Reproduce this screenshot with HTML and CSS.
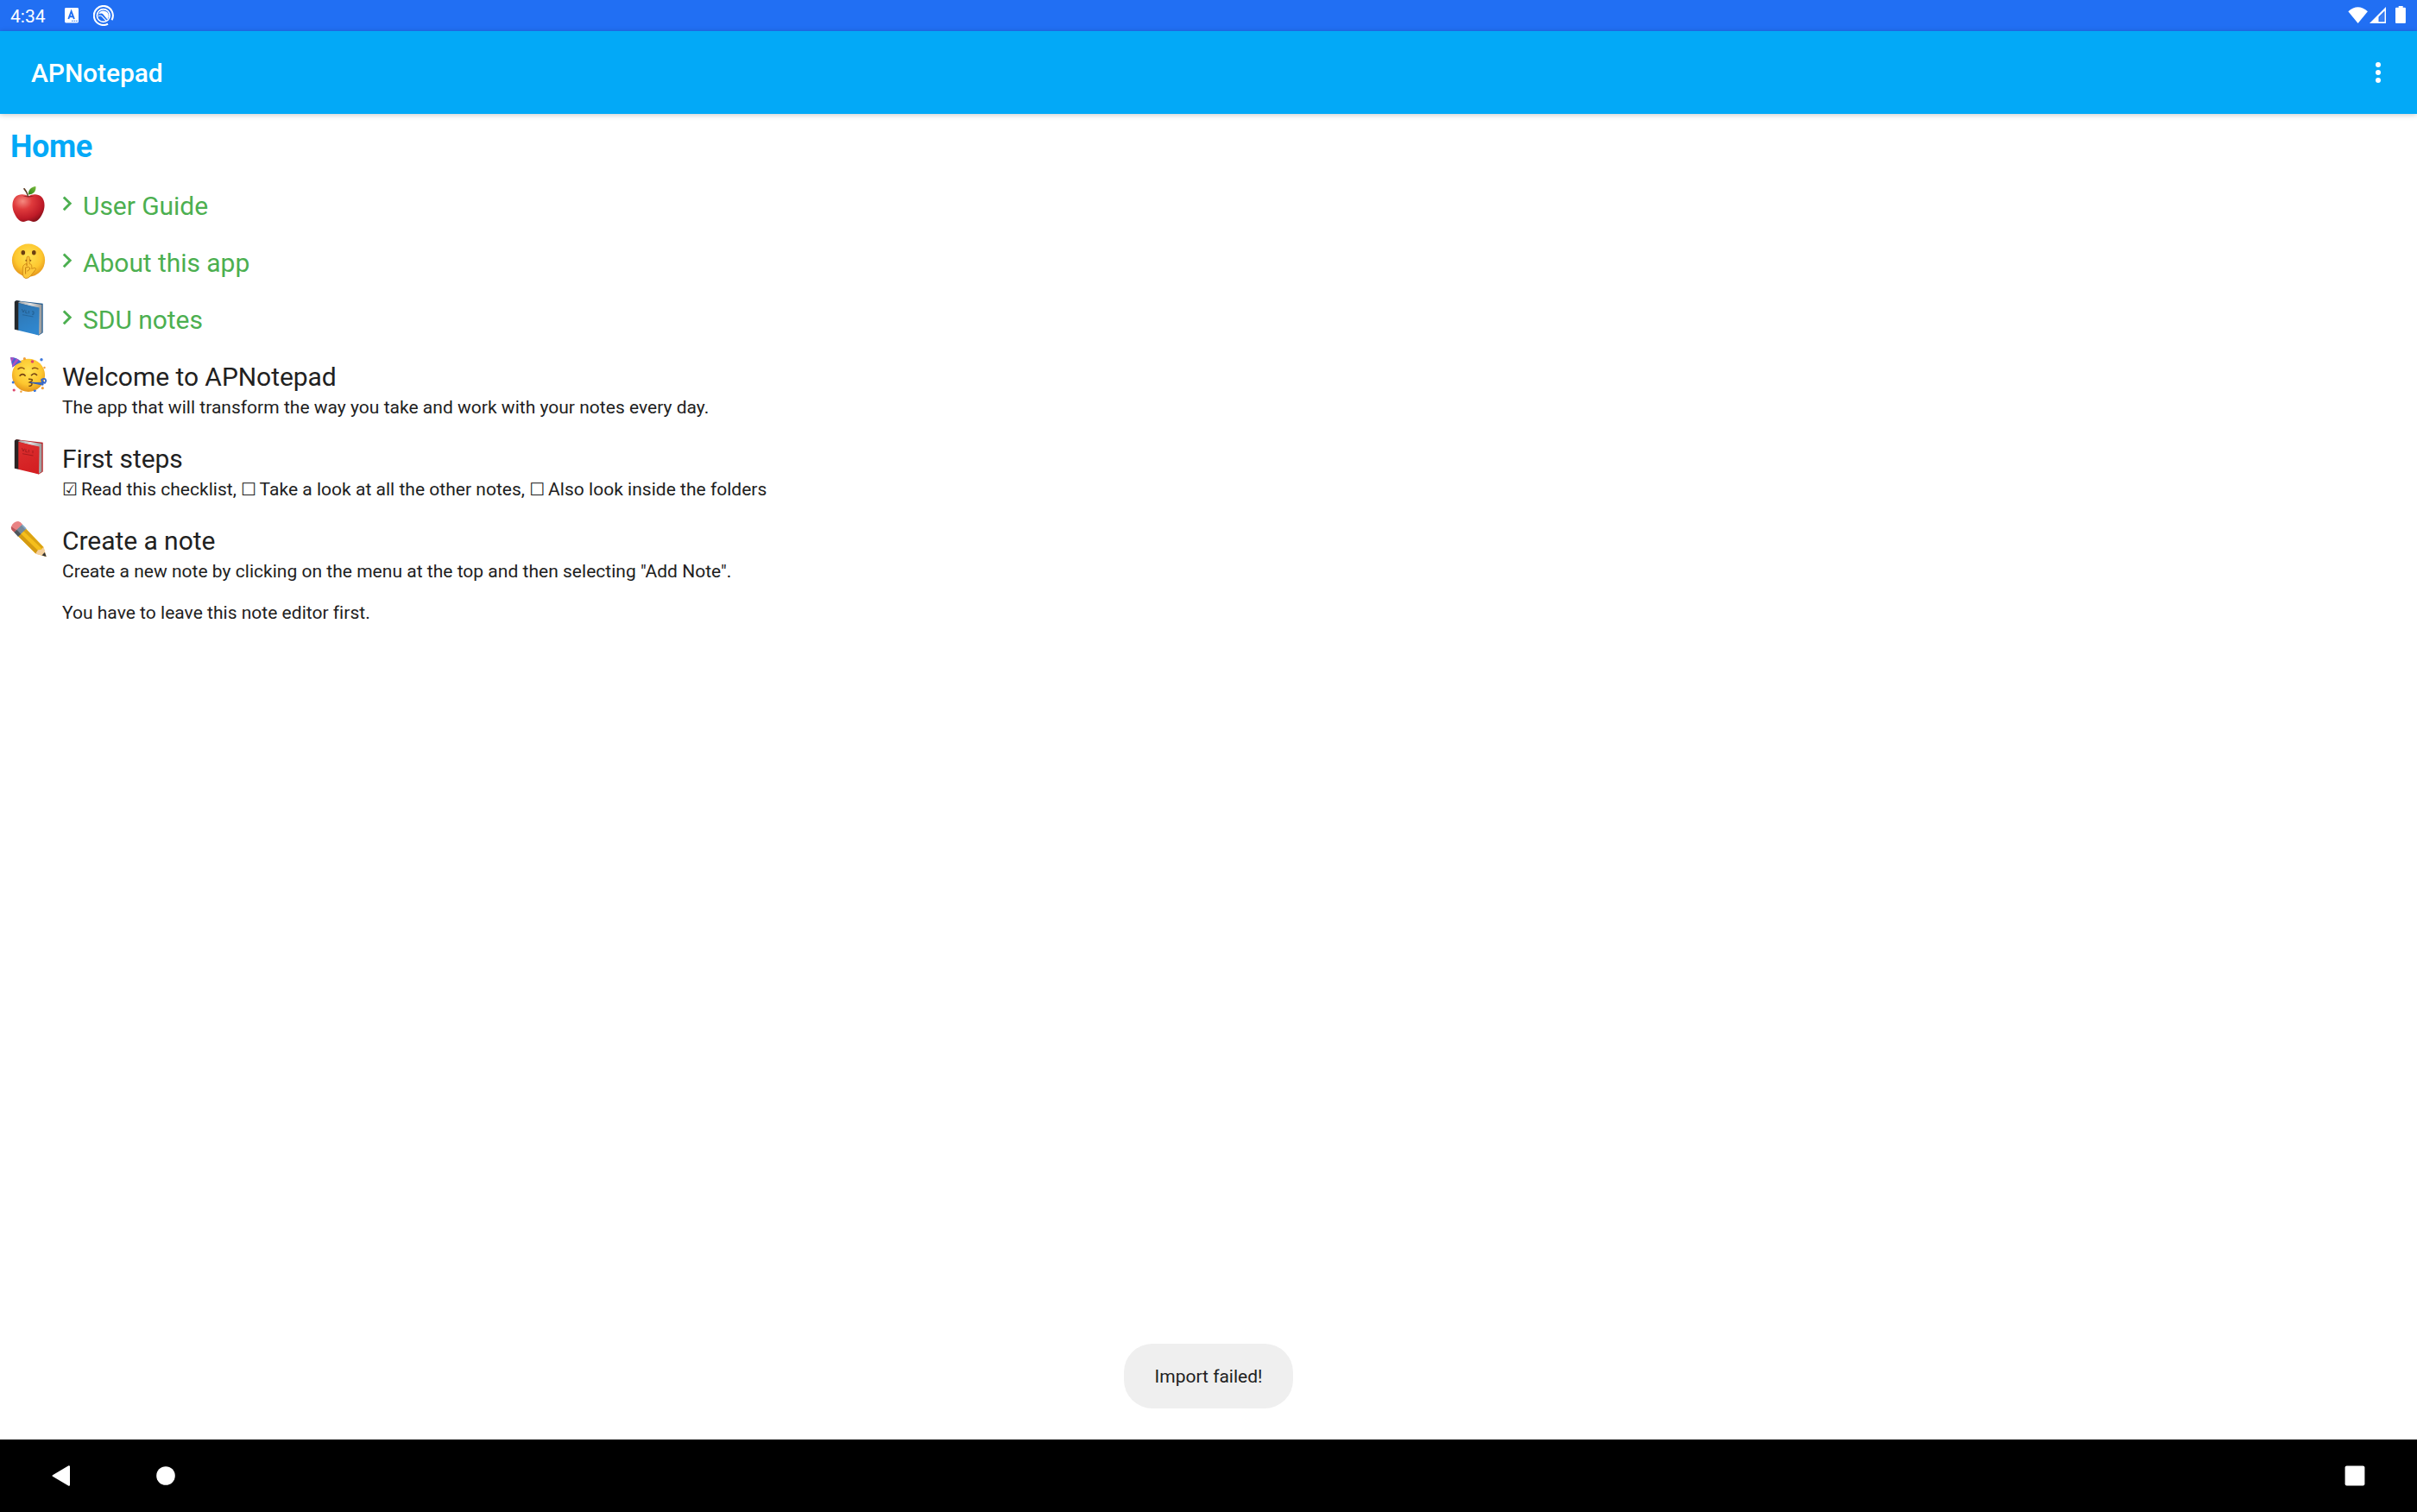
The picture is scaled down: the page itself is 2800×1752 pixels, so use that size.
FILE: index.html
```html
<!DOCTYPE html>
<html lang="en">
<head>
<meta charset="utf-8">
<title>APNotepad</title>
<link rel="stylesheet" href="styles.css">
</head>
<body>
<div class="screen">
  <header class="status-bar">
    <span class="clock">4:34</span>
    <svg class="status-letter" width="16" height="18" viewBox="0 0 16 18" aria-hidden="true">
      <rect width="16" height="17.5" rx="1.4" fill="#fff"/>
      <path d="M4.3 13 7.6 4.2 10.9 13M5.4 10.3h4.4" fill="none" stroke="#216ff3" stroke-width="1.9"/>
      <path d="M8 15.3h1.6M10.6 15.3h1.6M13.1 15.3h1.6" stroke="#216ff3" stroke-width="1.1"/>
    </svg>
    <svg class="status-q" width="24" height="24" viewBox="0 0 24 24" aria-hidden="true">
      <path d="M17 21.7A11 11 0 1 1 21.5 17.2" fill="none" stroke="#fff" stroke-width="2.1"/>
      <circle cx="11.8" cy="12" r="7.4" fill="none" stroke="#fff" stroke-width="1.7"/>
      <path d="M6.2 10.5A6 6 0 0 1 17.8 12.9Q17.5 14.8 16.4 16.4L11.2 10.2Q9.6 8.8 6.2 10.5Z" fill="#fff"/>
      <path d="M6 12.6Q8 11.4 9.6 12.4L15 18" fill="none" stroke="#fff" stroke-width="1.1"/>
    </svg>
    <svg class="status-system" width="68" height="22" viewBox="0 0 68 22" aria-hidden="true">
      <path d="M.3 6.3Q11.5-3.8 22.9 6.3L11.6 20Z" fill="#fff"/>
      <path fill-rule="evenodd" d="M25 20 44 1V20ZM35.5 12.4V18.3H42.5V5.4Z" fill="#fff"/>
      <path d="M36.7 12.7 41.6 7.8V17.4H36.7Z" fill="#fff" fill-opacity=".12"/>
      <path d="M58.7 0h5v1.7h2.2a1 1 0 0 1 1 1V19a1 1 0 0 1-1 1H56a1 1 0 0 1-1-1V2.7a1 1 0 0 1 1-1h2.7Z" fill="#fff"/>
    </svg>
  </header>

  <div class="app-bar">
    <h1 class="app-title">APNotepad</h1>
    <svg class="overflow" width="6" height="24" viewBox="0 0 6 24" aria-label="More options">
      <circle cx="3" cy="3" r="3" fill="#fff"/><circle cx="3" cy="12" r="3" fill="#fff"/><circle cx="3" cy="21" r="3" fill="#fff"/>
    </svg>
  </div>

  <main class="content">
    <h2 class="folder-title">Home</h2>
    <ul class="notes">
      <li class="note folder">
        <svg class="emoji" viewBox="0 0 42 42" aria-hidden="true">
          <defs>
            <radialGradient id="apple" cx=".32" cy=".25" r=".85"><stop offset="0" stop-color="#f58a80"/><stop offset=".35" stop-color="#df3a3c"/><stop offset=".75" stop-color="#be1a27"/><stop offset="1" stop-color="#7d0f18"/></radialGradient>
            <linearGradient id="leaf" x1="0" y1="1" x2="1" y2="0"><stop offset="0" stop-color="#2f7d17"/><stop offset="1" stop-color="#79bd3d"/></linearGradient>
          </defs>
          <path d="M21 12.5C25 9.6 32 9.2 36 13C40.5 17.5 40.3 25.5 37.7 31.5C34.8 38.3 31 42 27 42C24.5 42 23.5 40.6 21 40.6S17.5 42 15 42C11 42 7.2 38.3 4.3 31.5C1.7 25.5 1.5 17.5 6 13C10 9.2 17 9.6 21 12.5Z" fill="url(#apple)"/>
          <path d="M14 11.7Q21 15.3 28 11.7Q21 13 14 11.7Z" fill="#8c1720"/>
          <path d="M14.8 3.6 16.6 3Q20 6.6 21.4 12.7H20Q18.5 7.8 14.8 3.6Z" fill="#5b3a22"/>
          <path d="M20.6 10.5C21 4.6 24 1.6 29.4 1C30 6.4 27.2 10.4 20.6 10.5Z" fill="url(#leaf)"/>
        </svg>
        <svg class="chevron" width="12" height="18" viewBox="0 0 12 18" aria-hidden="true"><path d="M1.8 1.5 9.2 8.8 1.8 16.2" fill="none" stroke="#4caf50" stroke-width="2.9"/></svg>
        <div class="note-text"><h3 class="note-title">User Guide</h3></div>
      </li>
      <li class="note folder">
        <svg class="emoji" viewBox="0 0 42 42" aria-hidden="true">
          <defs>
            <radialGradient id="face" cx=".5" cy=".38" r=".62"><stop offset="0" stop-color="#ffe352"/><stop offset=".65" stop-color="#fdc72f"/><stop offset="1" stop-color="#e5951b"/></radialGradient>
          </defs>
          <circle cx="21" cy="20.6" r="19.1" fill="url(#face)"/>
          <ellipse cx="14.8" cy="11.8" rx="2.3" ry="2.7" fill="#6c4012"/><ellipse cx="27.3" cy="11.8" rx="2.3" ry="2.7" fill="#6c4012"/>
          <path d="M17.6 21.4Q20.8 18.4 24 21.4" fill="none" stroke="#8a5314" stroke-width="1.5"/>
          <path d="M19 27V18Q19 16 20.6 16T22.2 18V24.8C24.8 24.6 25 27.4 24.7 30.4L28.2 29.4Q30.3 29.6 29.2 31.4L23.4 38.8Q21 41.7 17.7 41.6Q14.2 40.6 14.3 36.2V30Q14.7 24.8 19 24.6Z" fill="#fdc83b" stroke="#c98212" stroke-width=".8"/>
          <path d="M17.6 36.5V29Q20.8 27 23 30Q21 33 19.5 33.2" fill="none" stroke="#be780f" stroke-width=".9"/>
        </svg>
        <svg class="chevron" width="12" height="18" viewBox="0 0 12 18" aria-hidden="true"><path d="M1.8 1.5 9.2 8.8 1.8 16.2" fill="none" stroke="#4caf50" stroke-width="2.9"/></svg>
        <div class="note-text"><h3 class="note-title">About this app</h3></div>
      </li>
      <li class="note folder">
        <svg class="emoji" viewBox="0 0 42 42" aria-hidden="true">
          <defs>
            <linearGradient id="blue" x1="0" y1="0" x2=".3" y2="1"><stop offset="0" stop-color="#2f73ad"/><stop offset="1" stop-color="#2f87cf"/></linearGradient>
            <linearGradient id="pages" x1="0" y1="0" x2="1" y2="0"><stop offset="0" stop-color="#9a9a9a"/><stop offset=".55" stop-color="#dedede"/><stop offset="1" stop-color="#999"/></linearGradient>
          </defs>
          <path d="M6.5 1.2 37.7 4.8V38.4L33 41.5 6 32Z" fill="#245d91"/>
          <path d="M7.4 3.2 12 2.2 36.4 6.1V38.6L32.5 41 31.5 10Z" fill="url(#pages)"/>
          <path d="M9 4.3 33.6 9.5 33 41.6 9 35.8Z" fill="url(#blue)"/>
          <path d="M4.8 2.7Q5.4 1 7.7 1.2L12 2Q9 2.2 9.3 4.4V35.8L4.8 34.7Z" fill="#24282c"/>
          <path d="M14 17.7 26.5 20" stroke="#235f92" stroke-width=".8"/>
          <path d="M13.4 11.2 15 15 16.5 11.8M18 12.4 17.7 15.6 20 16M21.4 13v3.4M25 14h2v3.2h-2" fill="none" stroke="#225887" stroke-width=".8"/>
        </svg>
        <svg class="chevron" width="12" height="18" viewBox="0 0 12 18" aria-hidden="true"><path d="M1.8 1.5 9.2 8.8 1.8 16.2" fill="none" stroke="#4caf50" stroke-width="2.9"/></svg>
        <div class="note-text"><h3 class="note-title">SDU notes</h3></div>
      </li>
      <li class="note">
        <svg class="emoji" viewBox="0 0 42 42" aria-hidden="true">
          <circle cx="21" cy="21.8" r="19.1" fill="url(#face)"/>
          <path d="M0 1Q7 .8 13 6.4Q7 8.4 2.5 12.8Z" fill="#4b62cf"/>
          <path d="M.2 1 4.3 1.7 1.3 7ZM7 2.6 9.8 4 2.4 12.5 2 10Z" fill="#b04fc0"/>
          <path d="M8.5 15Q12.5 11.2 16.5 14.6M25 14.4Q28.5 11.8 32.4 14.8" fill="none" stroke="#8a5314" stroke-width="1.4"/>
          <path d="M10.6 22.7Q14.2 18.6 17.6 22.7M24 22.2Q27.6 18 31 22" fill="none" stroke="#744313" stroke-width="1.6"/>
          <path d="M21 26.2Q26.8 26 24.8 28.6L22.3 30Q26.3 30.8 24.6 33.3Q23.4 34.8 21.4 34.2" fill="none" stroke="#744313" stroke-width="1.4"/>
          <path d="M23 30.2 38 30.8V33.2Z" fill="#3c72d4" stroke="#315bb5" stroke-width=".9"/>
          <circle cx="38.8" cy="28.3" r="2.4" fill="none" stroke="#3566c9" stroke-width="1.7"/>
          <path d="M35.5 26.5Q38.5 30 40.5 31.5" fill="none" stroke="#3566c9" stroke-width="1.4"/>
          <g fill="#dd476b"><circle cx="25.5" cy="6" r="1.8"/><circle cx="4.2" cy="39" r="1.6"/></g>
          <g fill="#3e78dc"><circle cx="36" cy="3.8" r="1.7"/><circle cx="3.2" cy="30" r="1.5"/><path d="M27 38.5l3 .5-.6 2h-2.4z"/></g>
          <g fill="#f0a03d"><circle cx="16.4" cy="2.7" r="1.6"/><circle cx="37.3" cy="36.7" r="1.6"/><circle cx="12.4" cy="40.7" r="1.2"/><circle cx="39.5" cy="13" r="1.2"/></g>
        </svg>
        <div class="note-text">
          <h3 class="note-title">Welcome to APNotepad</h3>
          <p class="note-body">The app that will transform the way you take and work with your notes every day.</p>
        </div>
      </li>
      <li class="note">
        <svg class="emoji" viewBox="0 0 42 42" aria-hidden="true">
          <defs><linearGradient id="red" x1="0" y1="0" x2=".3" y2="1"><stop offset="0" stop-color="#dc3030"/><stop offset="1" stop-color="#d41f22"/></linearGradient></defs>
          <path d="M6.5 1.2 37.7 4.8V38.4L33 41.5 6 32Z" fill="#b91d22"/>
          <path d="M7.4 3.2 12 2.2 36.4 6.1V38.6L32.5 41 31.5 10Z" fill="url(#pages)"/>
          <path d="M9 4.3 33.6 9.5 33 41.6 9 35.8Z" fill="url(#red)"/>
          <path d="M4.8 2.7Q5.4 1 7.7 1.2L12 2Q9 2.2 9.3 4.4V35.8L4.8 34.7Z" fill="#2a2323"/>
          <path d="M14 17.7 26.5 20" stroke="#9c181c" stroke-width=".8"/>
          <path d="M13.4 11.2 15 15 16.5 11.8M18 12.4 17.7 15.6 20 16M21.4 13v3.4M26 14v3.2" fill="none" stroke="#9c181c" stroke-width=".8"/>
        </svg>
        <div class="note-text">
          <h3 class="note-title">First steps</h3>
          <p class="note-body"><span class="box">☑</span> Read this checklist, <span class="box">☐</span> Take a look at all the other notes, <span class="box">☐</span> Also look inside the folders</p>
        </div>
      </li>
      <li class="note">
        <svg class="emoji" viewBox="0 0 42 42" aria-hidden="true">
          <path d="M9 18.2 17.8 9.6 38.4 31 41.4 41.9 29.4 38.6Z" fill="#f5bf1c"/>
          <path d="M9 18.2 12 15.3 32.6 35.6 29.4 38.6Z" fill="#d49a12"/>
          <path d="M15 12.3 17.8 9.6 38.4 31 36.2 32.6Z" fill="#dba414"/>
          <path d="M29 38.7 32 34.2 36 33.8 38.6 30.4 41.6 42Z" fill="#f3cf9d"/>
          <path d="M36.5 40.5 39.8 37 41.7 42Z" fill="#333"/>
          <path d="M4 13.3 13.2 4.4 18.4 9.8 9 18.8Z" fill="#75899b"/>
          <path d="M4 13.3 7 10.4 12.2 15.8 9 18.8Z" fill="#50565c"/>
          <path d="M12.4 5.2 13.6 4.2 18.5 9.3 17.4 10.4Z" fill="#87aac7"/>
          <path d="M4.4 13.6Q.2 10.6 1 7.2Q3.4 1.2 9 1Q11.6 1.5 14 4.4Z" fill="#e98283"/>
          <path d="M4.4 13.6Q.2 10.6 1 7.2L6.8 11Z" fill="#b95558"/>
        </svg>
        <div class="note-text">
          <h3 class="note-title">Create a note</h3>
          <p class="note-body">Create a new note by clicking on the menu at the top and then selecting "Add Note".</p>
          <p class="note-body second">You have to leave this note editor first.</p>
        </div>
      </li>
    </ul>
    <div class="toast">Import failed!</div>
  </main>

  <nav class="nav-bar">
    <svg class="nav-back" width="22" height="26" viewBox="0 0 22 26" aria-label="Back"><path d="M1.5 13 20 2.2V23.8Z" fill="#fff" stroke="#fff" stroke-width="2" stroke-linejoin="round"/></svg>
    <svg class="nav-home" width="22" height="22" viewBox="0 0 22 22" aria-label="Home"><circle cx="11" cy="11" r="10.8" fill="#fff"/></svg>
    <svg class="nav-recent" width="24" height="24" viewBox="0 0 24 24" aria-label="Recent apps"><rect x=".6" y=".6" width="22.8" height="22.8" rx="2" fill="#fff"/></svg>
  </nav>
</div>
</body>
</html>
```
FILE: styles.css
```css
* { box-sizing: border-box; margin: 0; padding: 0; }

body {
  font-family: Roboto, "DejaVu Sans", sans-serif;
  color: #212121;
  background: #fff;
}

svg { display: block; flex: none; }

.screen {
  display: flex;
  flex-direction: column;
  width: 2800px;
  height: 1752px;
  overflow: hidden;
}

.status-bar {
  display: flex;
  align-items: flex-start;
  height: 36px;
  padding: 0 12px;
  background: #216ff3;
  color: #fff;
}

.clock { width: 63px; padding-top: 7px; font-size: 21px; line-height: 25px; }
.status-letter { margin-top: 9px; }
.status-q { margin: 6px 0 0 17px; }
.status-system { margin: 7px 0 0 auto; }

.app-bar {
  position: relative;
  display: flex;
  align-items: center;
  justify-content: space-between;
  height: 96px;
  padding: 0 42px 0 36px;
  background: #03a9f7;
  color: #fff;
  box-shadow: 0 1px 6px rgba(0, 0, 0, .22);
}

.app-title { font-size: 30px; font-weight: 500; line-height: 36px; letter-spacing: -.08px; padding-top: 1px; }

.content {
  flex: 1;
  display: flex;
  flex-direction: column;
  padding: 17px 12px 36px;
}

.folder-title {
  font-size: 36px;
  font-weight: 700;
  line-height: 42px;
  letter-spacing: -.35px;
  color: #03a9f7;
}

.notes { list-style: none; padding-top: 24px; }

.note { display: flex; min-height: 95px; }
.note.folder { min-height: 66px; color: #4caf50; }

.emoji { width: 42px; height: 42px; margin-right: 18px; }
.chevron { margin: 12px 12px 0 0; }
.note-text { padding-top: 6px; }
.note-title { font-size: 30px; font-weight: 400; line-height: 35px; letter-spacing: -.05px; }
.note-body { font-size: 21px; line-height: 24px; letter-spacing: .02px; padding-top: 6px; }
.note-body.second { padding-top: 24px; }

.box {
  display: inline-block;
  width: 16.7px;
  font-family: "DejaVu Sans", sans-serif;
  font-size: 20px;
  line-height: 20px;
}

.toast {
  display: flex;
  align-items: center;
  align-self: center;
  height: 75px;
  margin-top: auto;
  padding: 2px 36px 0;
  border-radius: 33px;
  background: #efefef;
  font-size: 21px;
  line-height: 25px;
}

.nav-bar {
  display: flex;
  align-items: center;
  height: 84px;
  padding: 0 60px;
  background: #000;
}

.nav-home { margin-left: 99px; }
.nav-recent { margin-left: auto; }
```
